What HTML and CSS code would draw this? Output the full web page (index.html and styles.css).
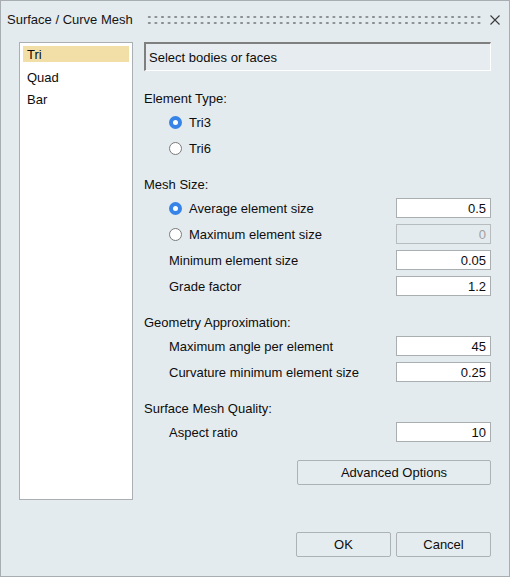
FILE: index.html
```html
<!DOCTYPE html>
<html>
<head>
<meta charset="utf-8">
<link rel="stylesheet" href="styles.css">
</head>
<body>
<div class="window">
  <div class="titlebar">
    <span class="title">Surface / Curve Mesh</span>
    <span class="grip"></span>
    <svg class="close" width="10" height="10" viewBox="0 0 10 10"><path d="M0.5 0.5 L9.5 9.5 M9.5 0.5 L0.5 9.5" stroke="#3a3a3a" stroke-width="1.1" fill="none"/></svg>
  </div>
  <div class="main">
    <ul class="list">
      <li class="sel">Tri</li>
      <li>Quad</li>
      <li>Bar</li>
    </ul>
    <div class="panel">
      <div class="selectbox">Select bodies or faces</div>

      <div class="heading first">Element Type:</div>
      <div class="row"><span class="radio on"></span><span>Tri3</span></div>
      <div class="row"><span class="radio"></span><span>Tri6</span></div>

      <div class="heading">Mesh Size:</div>
      <div class="row"><span class="radio on"></span><span>Average element size</span><span class="field">0.5</span></div>
      <div class="row"><span class="radio"></span><span>Maximum element size</span><span class="field disabled">0</span></div>
      <div class="row"><span>Minimum element size</span><span class="field">0.05</span></div>
      <div class="row"><span>Grade factor</span><span class="field">1.2</span></div>

      <div class="heading">Geometry Approximation:</div>
      <div class="row"><span>Maximum angle per element</span><span class="field">45</span></div>
      <div class="row"><span>Curvature minimum element size</span><span class="field">0.25</span></div>

      <div class="heading">Surface Mesh Quality:</div>
      <div class="row"><span>Aspect ratio</span><span class="field">10</span></div>

      <button class="btn adv">Advanced Options</button>

      <div class="footer">
        <button class="btn">OK</button>
        <button class="btn">Cancel</button>
      </div>
    </div>
  </div>
</div>
</body>
</html>
```
FILE: styles.css
```css
* { box-sizing: border-box; }
html, body { margin: 0; padding: 0; }
body {
  font-family: "Liberation Sans", Arial, sans-serif;
  font-size: 13px;
  color: #0d0d0d;
  background: #e4ebee;
}
.window {
  width: 510px;
  height: 577px;
  border: 1px solid #a7adb1;
  background: #e4ebee;
  display: flex;
  flex-direction: column;
}
.titlebar {
  height: 41px;
  flex: none;
  display: flex;
  align-items: center;
  padding: 0 9px 4px 6px;
}
.title { white-space: nowrap; color: #141414; }
.grip {
  flex: 1;
  height: 12px;
  margin: 0 9px 0 13px;
  background-image: radial-gradient(circle at center, #878c90 1px, rgba(0,0,0,0) 1.4px);
  background-size: 6.6px 6px;
  background-position: 0 0;
}
.close { display: block; flex: none; }
.main {
  flex: 1;
  display: flex;
  gap: 11px;
  padding: 0 18px 19px 18px;
}
.list {
  list-style: none;
  margin: 0;
  padding: 3px;
  width: 114px;
  height: 458px;
  flex: none;
  background: #fff;
  border: 1px solid #a9afb3;
}
.list li {
  height: 16px;
  line-height: 17px;
  padding-left: 4px;
  margin-bottom: 6.5px;
}
.list li.sel { background: #f2dea7; }
.panel {
  flex: 1;
  display: flex;
  flex-direction: column;
}
.selectbox {
  height: 29px;
  flex: none;
  display: flex;
  align-items: center;
  padding-left: 3px;
  border-top: 2px solid #7f7f7f;
  border-left: 2px solid #7f7f7f;
  border-right: 1px solid #ffffff;
  border-bottom: 1px solid #ffffff;
  background: #e6ecef;
}
.heading {
  height: 22px;
  flex: none;
  display: flex;
  align-items: center;
  margin-top: 12px;
}
.heading.first { margin-top: 16px; }
.row {
  height: 26px;
  flex: none;
  display: flex;
  align-items: center;
  padding-left: 25px;
}
.radio {
  width: 13px;
  height: 13px;
  border-radius: 50%;
  border: 1px solid #7a7a7a;
  background: #fff;
  margin-right: 7px;
  flex: none;
}
.radio.on {
  border: 4.5px solid #3784e8;
  background: #fff;
}
.field {
  margin-left: auto;
  width: 95px;
  height: 20px;
  border: 1px solid #a9aeb1;
  background: #fff;
  display: flex;
  align-items: center;
  justify-content: flex-end;
  padding-right: 4px;
  color: #0d0d0d;
}
.field.disabled {
  background: #e4ebee;
  border-color: #b7bcbf;
  color: #a0a0a0;
}
.btn {
  font-family: "Liberation Sans", Arial, sans-serif;
  font-size: 13px;
  color: #0d0d0d;
  background: #e5ecef;
  border: 1px solid #acb2b6;
  border-radius: 2px;
  height: 25px;
  width: 95px;
  padding: 0;
}
.btn.adv {
  align-self: flex-end;
  width: 194px;
  margin-top: 15px;
  flex: none;
}
.footer {
  margin-top: auto;
  display: flex;
  justify-content: flex-end;
  gap: 5px;
}
```
